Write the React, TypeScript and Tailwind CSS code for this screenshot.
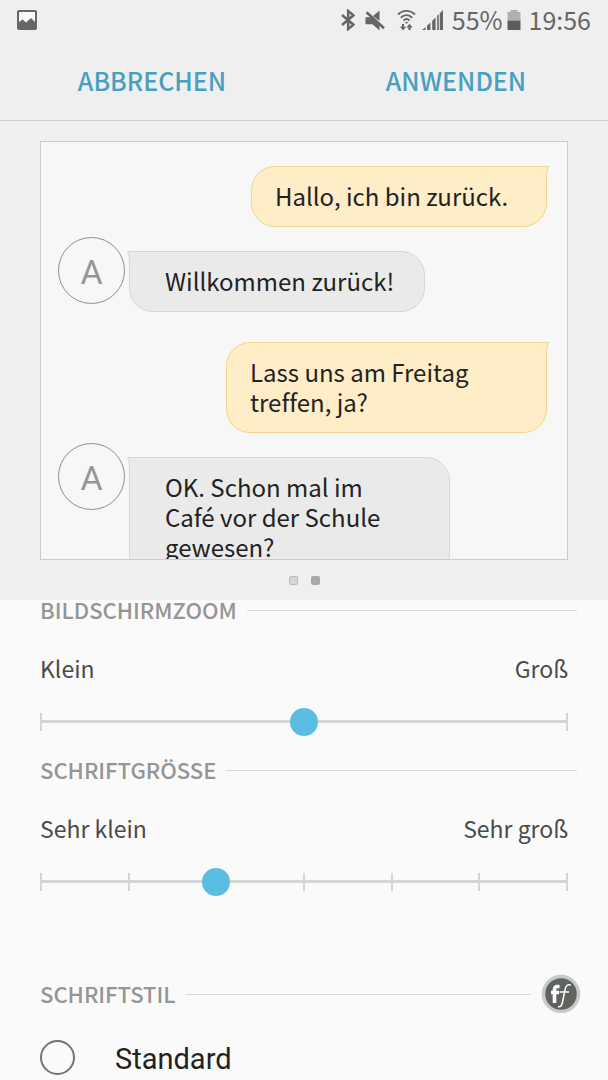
import React, { useState } from 'react';
import clsx from 'clsx';

type Message = {
  text: string;
  own: boolean;
  width: string;
};

const messages: Message[] = [
  { text: 'Hallo, ich bin zurück.', own: true, width: 'w-[296px]' },
  { text: 'Willkommen zurück!', own: false, width: 'w-[296px]' },
  { text: 'Lass uns am Freitag\ntreffen, ja?', own: true, width: 'w-[321px]' },
  { text: 'OK. Schon mal im\nCafé vor der Schule\ngewesen?', own: false, width: 'w-[321px]' },
];

const StatusBar: React.FC = () => (
  <div className="flex h-10 items-center justify-between px-[17px] text-[25px] leading-[38px] text-[#666664]">
    <svg width="20" height="22" viewBox="0 -1 20 22" fill="none">
      <rect x="1" y="1" width="18" height="18" rx="1" fill="#f8f8f8" stroke="#666664" strokeWidth="2" />
      <path d="M1 13l4.5-3.5 3.5 3 5-4.5 5 5v6H1z" fill="#666664" />
    </svg>

    <div className="flex items-center">
      <svg className="mr-2.5" width="14" height="22" viewBox="0 -1 14 22" fill="none" stroke="#666664" strokeWidth="2.5">
        <path d="M1 5l11.5 9.7L7.2 19V1l5.3 4.3L1 15" />
      </svg>
      <svg className="mr-3" width="20" height="22" viewBox="0 -1 20 22" fill="#666664">
        <path d="M.5 7.3H6L14.5 15.5V20.5L7.5 14.3H.5zM8 6L14.5 .5v10.5z" />
        <path d="M1.5 2.2L19 18.3" stroke="#666664" strokeWidth="2.6" />
      </svg>
      <svg className="mr-1.5" width="19" height="22" viewBox="0 -1 19 22" fill="none" stroke="#666664" strokeWidth="1.9">
        <path d="M1 4.5c5-4.8 12-4.8 17 0M3.8 7.7c3.4-3.2 8-3.2 11.4 0M6.5 10.5c1.8-1.7 4.2-1.7 6 0" />
        <path d="M7.7 12h3.6L9.5 14z" fill="#666664" stroke="none" />
        <path d="M6 14v4M12.5 20v-4" strokeWidth="2.2" />
        <path d="M2.9 16.8h6.2L6 20.4zM9.4 17.4h6.2l-3.1-3.6z" fill="#666664" stroke="none" />
      </svg>
      <svg className="mr-2" width="22" height="22" viewBox="0 -1 22 22" fill="#666664">
        <path d="M0 20l3.5-3v3zM5 20v-4.3l3.4-3.2V20zM10.2 20v-9.2l3.4-3.2V20zM15.2 20V5.8l1.6-1.5V20zM17.8 20V3.2L21 0v20z" />
      </svg>
      <span className="pb-0.5">55%</span>
      <svg className="mr-2 ml-1" width="14" height="22" viewBox="0 -1 14 22">
        <path d="M3.5 0h7v2H13.5v8.5H.5V2h3z" fill="#b0b0ae" />
        <path d="M.5 10.5h13V20H.5z" fill="#5c5c59" />
      </svg>
      <span className="pb-0.5">19:56</span>
    </div>
  </div>
);

const Bubble: React.FC<{ message: Message }> = ({ message }) => {
  const { own, text, width } = message;

  return (
    <div
      className={clsx(
        'relative border pt-[14px] pb-[15px] text-[24px] leading-[30px] text-[#222222]',
        width,
        own
          ? 'rounded-[24px] rounded-tr-none border-[#f2d48a] bg-[#feedc7] pr-5 pl-[23px]'
          : 'rounded-[24px] rounded-tl-none border-[#d6d6d6] bg-[#eaeaea] pr-5 pl-[35px]'
      )}
    >
      <p className="whitespace-pre-line [font-variant-ligatures:none]">{text}</p>
      <svg
        className={clsx('absolute -top-px', own ? '-right-[3px]' : '-left-[3px] -scale-x-100')}
        width="4"
        height="14"
        viewBox="0 0 4 14"
        fill="none"
      >
        <path d="M0 0h4v14H0z" fill="#f7f7f7" />
        <path d="M0 0h3.8C2.4 2.4 1.5 6 1.5 14H0z" fill={own ? '#feedc7' : '#eaeaea'} />
        <path d="M0 .5h3.5C2.2 3 1.5 6 1.5 14" stroke={own ? '#f2d48a' : '#d6d6d6'} />
      </svg>
    </div>
  );
};

const ChatPreview: React.FC = () => (
  <div className="h-[419px] overflow-hidden border border-[#cccccc] bg-[#f7f7f7] pt-6 pr-5 pl-[17px]">
    {messages.map((message) =>
      message.own ? (
        <div key={message.text} className="flex justify-end">
          <Bubble message={message} />
        </div>
      ) : (
        <div key={message.text} className="flex items-start pt-[10px] pb-[30px]">
          <div className="mr-1 flex size-[67px] shrink-0 items-center justify-center rounded-full border border-[#90908e] pt-0.5 font-['Roboto',sans-serif] text-[34px] leading-none text-[#969694]">
            A
          </div>
          <div className="pt-[14px]">
            <Bubble message={message} />
          </div>
        </div>
      )
    )}
  </div>
);

const SectionHeading: React.FC<{ title: string; children?: React.ReactNode }> = ({ title, children }) => (
  <div className="flex items-center gap-[10px] pr-[31px] pl-10">
    <h2 className="pb-0.5 text-[22px] leading-[18px] font-medium text-[#959595]">{title}</h2>
    <div className="h-px flex-1 bg-[#d8d8d8]" />
    {children}
  </div>
);

type StepSliderProps = {
  label: string;
  minLabel: string;
  maxLabel: string;
  steps: number;
  value: number;
  onChange: (value: number) => void;
};

const StepSlider: React.FC<StepSliderProps> = ({ label, minLabel, maxLabel, steps, value, onChange }) => (
  <div className="px-10 pt-8">
    <div className="flex justify-between text-[23px] leading-8 text-[#4a4a4a]">
      <span>{minLabel}</span>
      <span>{maxLabel}</span>
    </div>
    <div className="relative mt-6 h-7">
      <div className="absolute inset-x-0 top-3 h-[3px] bg-[#d5d5d5]" />
      <div className="absolute inset-x-0 top-[5px] flex justify-between">
        {Array.from({ length: steps + 1 }, (_, i) => (
          <div key={i} className="h-[18px] w-[2px] bg-[#d5d5d5]" />
        ))}
      </div>
      <input
        type="range"
        aria-label={label}
        min={0}
        max={steps}
        value={value}
        onChange={(e) => onChange(Number(e.target.value))}
        className="absolute inset-y-0 -left-3.5 w-[calc(100%+28px)] cursor-pointer appearance-none bg-transparent [&::-webkit-slider-thumb]:size-[28px] [&::-webkit-slider-thumb]:appearance-none [&::-webkit-slider-thumb]:rounded-full [&::-webkit-slider-thumb]:bg-[#5bbde1]"
      />
    </div>
  </div>
);

const App: React.FC = () => {
  const [zoom, setZoom] = useState(1);
  const [fontSize, setFontSize] = useState(2);
  const [fontStyle, setFontStyle] = useState('');

  return (
    <div className="flex h-screen flex-col overflow-hidden bg-[#fafafa] font-['Noto_Sans_CJK_JP','Noto_Sans',sans-serif]">
      {/* Header */}
      <header className="border-b border-[#cfcfcf] bg-[#efefef]">
        <StatusBar />
        <div className="grid grid-cols-2 text-[25px] leading-[80px] font-medium text-[#489fc0]">
          <button type="button">ABBRECHEN</button>
          <button type="button">ANWENDEN</button>
        </div>
      </header>

      {/* Preview */}
      <section className="bg-[#efefef] px-10 pt-5">
        <ChatPreview />
        <div className="flex h-10 items-center justify-center gap-[13px]">
          <span className="size-[9px] rounded-[2px] border border-[#b4bebe] bg-[#d4d7d7]" />
          <span className="size-[9px] rounded-[2px] bg-[#a8a8a8]" />
        </div>
      </section>

      {/* Settings */}
      <main>
        <SectionHeading title="BILDSCHIRMZOOM" />
        <StepSlider
          label="Bildschirmzoom"
          minLabel="Klein"
          maxLabel="Groß"
          steps={2}
          value={zoom}
          onChange={setZoom}
        />

        <div className="pt-6">
          <SectionHeading title="SCHRIFTGRÖSSE" />
          <StepSlider
            label="Schriftgröße"
            minLabel="Sehr klein"
            maxLabel="Sehr groß"
            steps={6}
            value={fontSize}
            onChange={setFontSize}
          />
        </div>

        <div className="pt-[78px]">
          <SectionHeading title="SCHRIFTSTIL">
            <button type="button" aria-label="Schriften herunterladen" className="-mr-1 shrink-0">
              <svg width="40" height="40" viewBox="0 0 40 40" fill="none">
                <circle cx="20" cy="20" r="17.5" fill="#62625f" stroke="#c3cccd" strokeWidth="3.5" />
                <path d="M18.5 12.5h-2c-2 0-3 1-3 3V29M10 18.5h8" stroke="#fff" strokeWidth="3.6" />
                <path
                  d="M30 11.2c-3.2-1.6-5 .4-5.8 4L21.5 28c-.7 3.6-2 5.4-4.5 4.6M18.5 18h9.5"
                  stroke="#fff"
                  strokeWidth="1.5"
                />
              </svg>
            </button>
          </SectionHeading>
          <label className="flex items-center gap-10 px-10 pt-[22px] font-['Roboto',sans-serif] text-[29px] leading-[38px] text-[#222222]">
            <input
              type="radio"
              name="font-style"
              value="standard"
              checked={fontStyle === 'standard'}
              onChange={(e) => setFontStyle(e.target.value)}
              className="size-[35px] appearance-none rounded-full border-2 border-[#74746e] checked:bg-[#5bbde1]"
            />
            <span className="pt-1">Standard</span>
          </label>
        </div>
      </main>
    </div>
  );
};

export default App;
